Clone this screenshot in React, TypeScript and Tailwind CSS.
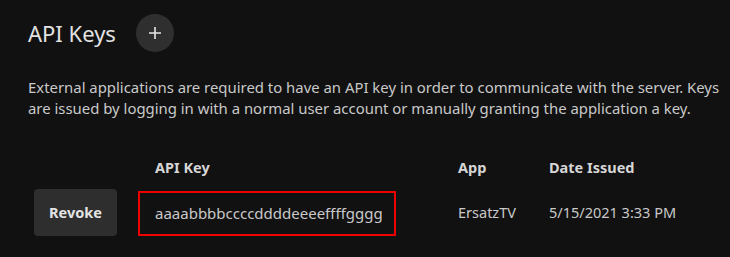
import React from 'react';

const font = { fontFamily: '"Noto Sans", sans-serif' };

interface ApiKeyRow {
  key: string;
  app: string;
  issued: string;
}

const rows: ApiKeyRow[] = [
  { key: 'aaaabbbbccccddddeeeeffffgggg', app: 'ErsatzTV', issued: '5/15/2021 3:33 PM' },
];

export default function App() {
  return (
    <div
      className="w-[730px] h-[257px] bg-[#111111] text-[#e0e0e0] overflow-hidden"
      style={font}
    >
      <div className="flex items-center gap-5 pl-7 pt-[14px]">
        <h1 className="text-[22px] leading-[38px] text-[#e2e2e2]">API Keys</h1>
        <button className="w-[38px] h-[38px] rounded-full bg-[#2f2f2f] flex items-center justify-center">
          <svg width="14" height="14" viewBox="0 0 14 14" fill="none" stroke="#e6e6e6" strokeWidth="1.6">
            <path d="M7 1v12M1 7h12" />
          </svg>
        </button>
      </div>

      <p className="pl-7 mt-[25px] text-[14.9px] leading-[21px] text-[#c9c9c9] whitespace-nowrap">
        External applications are required to have an API key in order to communicate with the server. Keys
        <br />
        are issued by logging in with a normal user account or manually granting the application a key.
      </p>

      <div className="grid grid-cols-[104px_320px_91px_1fr] pl-[34px] mt-[38px] items-center">
        <div />
        <div className="pl-[17px] text-[14.5px] font-bold text-[#d6d6d6] leading-[20px]">API Key</div>
        <div className="text-[14.5px] font-bold text-[#d6d6d6] leading-[20px]">App</div>
        <div className="text-[14.5px] font-bold text-[#d6d6d6] leading-[20px]">Date Issued</div>

        {rows.map((row) => (
          <React.Fragment key={row.key}>
            <div className="pt-[12px]">
              <button className="w-[83px] h-[47px] rounded bg-[#2e2e2e] text-[14.5px] font-bold text-[#e4e4e4]">
                Revoke
              </button>
            </div>
            <div className="pt-[14px]">
              <div className="w-[258px] h-[45px] border-2 border-[#ee0000] flex items-center pl-[15px] text-[15px] text-[#c9c9c9]">
                {row.key}
              </div>
            </div>
            <div className="pt-[12px] text-[14.5px] text-[#c9c9c9]">{row.app}</div>
            <div className="pt-[12px] text-[14.5px] text-[#c9c9c9]">{row.issued}</div>
          </React.Fragment>
        ))}
      </div>
    </div>
  );
}
